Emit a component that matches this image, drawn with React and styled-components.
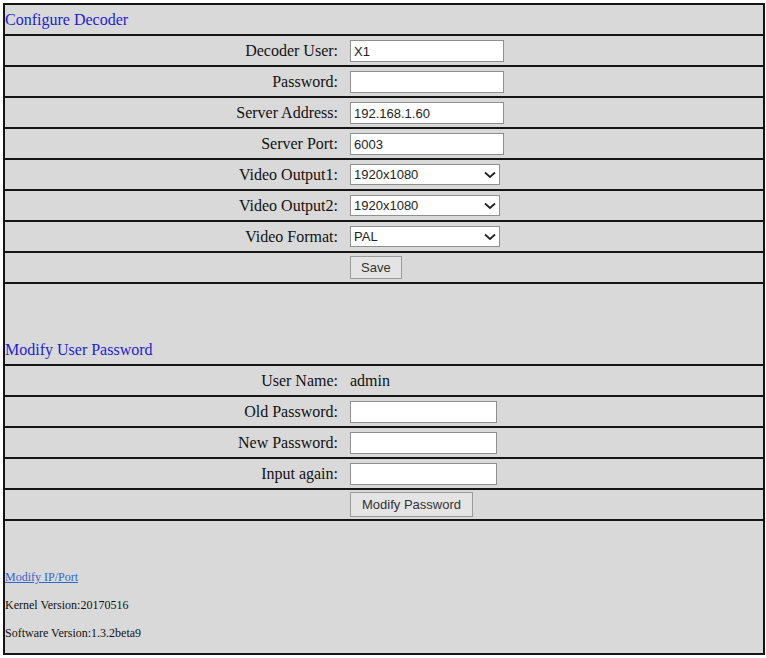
import { createGlobalStyle, styled } from 'styled-components';

const GlobalStyle = createGlobalStyle`
    html, body {
        margin: 0;
        padding: 0;
        background: #ffffff;
    }
    body {
        font-family: "Liberation Serif", "Times New Roman", serif;
        font-size: 16px;
        color: #111;
    }
`;

const Page = styled.div`
    padding: 3px;
`;
const Panel = styled.div`
    width: 762px;
    height: 652px;
    box-sizing: border-box;
    border: 2px solid #151515;
    background-color: #d9d9d9;
    display: flex;
    flex-direction: column;
`;
const TitleRow = styled.div`
    height: 31px;
    box-sizing: border-box;
    border-bottom: 2px solid #151515;
    display: flex;
    align-items: center;
    color: #1c1cd6;
    font-size: 16px;
`;
const Spacer = styled.div`
    height: 51px;
`;
const Row = styled.div`
    height: 31px;
    box-sizing: border-box;
    border-bottom: 2px solid #151515;
    display: grid;
    grid-template-columns: 345px 1fr;
    align-items: center;
`;
const Label = styled.div`
    text-align: right;
    padding-right: 12px;
    white-space: nowrap;
`;
const Value = styled.div`
    display: flex;
    align-items: center;
`;
const PlainValue = styled.span`
    padding-left: 0;
`;
const TextInput = styled.input`
    width: ${(p) => p.$width}px;
    height: 22px;
    box-sizing: border-box;
    border: 1px solid #8f8f8f;
    background: #fff;
    padding: 2px 3px 0;
    margin: 0;
    font-family: "Liberation Sans", Arial, sans-serif;
    font-size: 13px;
    color: #222;
    outline: none;
`;
const SelectWrap = styled.div`
    position: relative;
    width: 150px;
    height: 21px;
`;
const Select = styled.select`
    width: 100%;
    height: 100%;
    box-sizing: border-box;
    appearance: none;
    -webkit-appearance: none;
    border: 1px solid #8f8f8f;
    border-radius: 0;
    background: #fff;
    padding: 0 3px;
    margin: 0;
    font-family: "Liberation Sans", Arial, sans-serif;
    font-size: 13px;
    color: #222;
    outline: none;
`;
const Chevron = styled.svg`
    position: absolute;
    right: 4px;
    top: 7px;
    pointer-events: none;
`;
const Button = styled.button`
    height: ${(p) => p.$height || 23}px;
    box-sizing: border-box;
    padding: 0 ${(p) => p.$pad || 10}px;
    margin: 0;
    border: 1px solid #9a9a9a;
    border-radius: 0;
    background: #e4e4e4;
    font-family: "Liberation Sans", Arial, sans-serif;
    font-size: 13px;
    color: #333;
`;
const Footer = styled.div`
    padding-top: 49px;
    display: flex;
    flex-direction: column;
    gap: 14px;
    font-size: 12px;
    line-height: 14px;
`;
const FooterLink = styled.a`
    color: #3366cc;
    text-decoration: underline;
    align-self: flex-start;
`;
const FooterText = styled.div``;

function Dropdown({ value }) {
    return (
        <SelectWrap>
            <Select defaultValue={value}>
                <option>{value}</option>
            </Select>
            <Chevron width="12" height="8" viewBox="0 0 12 8">
                <path d="M1 1.5 L6 6 L11 1.5" fill="none" stroke="#222" strokeWidth="1.8" />
            </Chevron>
        </SelectWrap>
    );
}

function Field({ label, children }) {
    return (
        <Row>
            <Label>{label}</Label>
            <Value>{children}</Value>
        </Row>
    );
}

export default function App() {
    return (
        <Page>
            <GlobalStyle />
            <Panel>
                <TitleRow>Configure Decoder</TitleRow>
                <Field label="Decoder User:">
                    <TextInput $width={154} defaultValue="X1" />
                </Field>
                <Field label="Password:">
                    <TextInput $width={154} type="password" />
                </Field>
                <Field label="Server Address:">
                    <TextInput $width={154} defaultValue="192.168.1.60" />
                </Field>
                <Field label="Server Port:">
                    <TextInput $width={154} defaultValue="6003" />
                </Field>
                <Field label="Video Output1:">
                    <Dropdown value="1920x1080" />
                </Field>
                <Field label="Video Output2:">
                    <Dropdown value="1920x1080" />
                </Field>
                <Field label="Video Format:">
                    <Dropdown value="PAL" />
                </Field>
                <Field label="">
                    <Button $pad={10}>Save</Button>
                </Field>

                <Spacer />
                <TitleRow>Modify User Password</TitleRow>
                <Field label="User Name:">
                    <PlainValue>admin</PlainValue>
                </Field>
                <Field label="Old Password:">
                    <TextInput $width={147} type="password" />
                </Field>
                <Field label="New Password:">
                    <TextInput $width={147} type="password" />
                </Field>
                <Field label="Input again:">
                    <TextInput $width={147} type="password" />
                </Field>
                <Field label="">
                    <Button $pad={11} $height={25}>Modify Password</Button>
                </Field>

                <Footer>
                    <FooterLink href="#">Modify IP/Port</FooterLink>
                    <FooterText>Kernel Version:20170516</FooterText>
                    <FooterText>Software Version:1.3.2beta9</FooterText>
                </Footer>
            </Panel>
        </Page>
    );
}
